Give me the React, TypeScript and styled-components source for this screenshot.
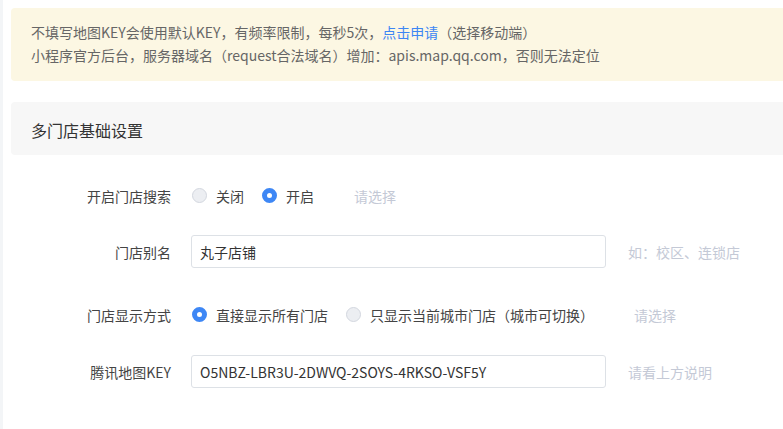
import { useState } from "react";
import styled, { createGlobalStyle } from "styled-components";

const GlobalStyle = createGlobalStyle`
    html, body {
        margin: 0;
        padding: 0;
        background: #f3f5f7;
        overflow: hidden;
    }
    body {
        font-family: "Noto Sans CJK SC", "Noto Sans", sans-serif;
        font-size: 14px;
        color: #333;
    }
`;

interface RowProps {
    label: string;
    hint?: string;
    gap: number;
    children: React.ReactNode;
}

const FormRow: React.FC<RowProps> = (props) => {
    return (
        <SC.Row $gap={props.gap}>
            <SC.Label>{props.label}</SC.Label>
            <SC.Control>{props.children}</SC.Control>
            {props.hint && <SC.Hint>{props.hint}</SC.Hint>}
        </SC.Row>
    );
};

interface RadioProps {
    options: string[];
    value: number;
    onChange: (index: number) => void;
}

const RadioGroup: React.FC<RadioProps> = (props) => {
    return (
        <>
            {props.options.map((text, i) => (
                <SC.RadioItem key={text} onClick={() => props.onChange(i)}>
                    <SC.RadioDot $checked={props.value === i} />
                    <span>{text}</span>
                </SC.RadioItem>
            ))}
        </>
    );
};

export default function App() {
    const [search, setSearch] = useState(1);
    const [mode, setMode] = useState(0);
    const [alias, setAlias] = useState("丸子店铺");
    const [mapKey, setMapKey] = useState("O5NBZ-LBR3U-2DWVQ-2SOYS-4RKSO-VSF5Y");

    return (
        <>
            <GlobalStyle />
            <SC.Panel>
                <SC.Notice>
                    <div>
                        不填写地图KEY会使用默认KEY，有频率限制，每秒5次，<SC.Link>点击申请</SC.Link>（选择移动端）
                    </div>
                    <div>小程序官方后台，服务器域名（request合法域名）增加：apis.map.qq.com，否则无法定位</div>
                </SC.Notice>
                <SC.SectionTitle>多门店基础设置</SC.SectionTitle>
                <SC.Form>
                    <FormRow label="开启门店搜索" hint="请选择" gap={23}>
                        <RadioGroup options={["关闭", "开启"]} value={search} onChange={setSearch} />
                    </FormRow>
                    <FormRow label="门店别名" hint="如：校区、连锁店" gap={30}>
                        <SC.Input value={alias} onChange={(e) => setAlias(e.target.value)} />
                    </FormRow>
                    <FormRow label="门店显示方式" hint="请选择" gap={24}>
                        <RadioGroup
                            options={["直接显示所有门店", "只显示当前城市门店（城市可切换）"]}
                            value={mode}
                            onChange={setMode}
                        />
                    </FormRow>
                    <FormRow label="腾讯地图KEY" hint="请看上方说明" gap={0}>
                        <SC.Input value={mapKey} onChange={(e) => setMapKey(e.target.value)} />
                    </FormRow>
                </SC.Form>
            </SC.Panel>
        </>
    );
}

const SC = {
    Panel: styled.div`
        margin-left: 3px;
        width: 1000px;
        height: 429px;
        box-sizing: border-box;
        padding: 8px 0 0 8px;
        background: #fff;
    `,
    Notice: styled.div`
        background: #fcf7e3;
        border-radius: 4px;
        padding: 13px 20px 14px;
        line-height: 23px;
        color: #666;
    `,
    Link: styled.span`
        color: #3d86f4;
        cursor: pointer;
    `,
    SectionTitle: styled.div`
        margin-top: 21px;
        height: 53px;
        line-height: 56px;
        padding-left: 20px;
        background: #f7f7f7;
        border-radius: 4px;
        font-size: 16px;
        color: #333;
    `,
    Form: styled.div`
        padding-top: 24px;
    `,
    Row: styled.div<{ $gap: number }>`
        display: flex;
        align-items: center;
        height: 33px;
        margin-bottom: ${(p) => p.$gap}px;
    `,
    Label: styled.div`
        width: 160px;
        text-align: right;
        color: #444;
        margin-right: 20px;
    `,
    Control: styled.div`
        display: flex;
        align-items: center;
    `,
    Hint: styled.div`
        margin-left: 22px;
        color: #c4c9d6;
    `,
    RadioItem: styled.label`
        display: flex;
        align-items: center;
        margin-right: 18px;
        color: #444;
        cursor: pointer;
        &:first-child {
            margin-left: 1px;
        }
    `,
    RadioDot: styled.span<{ $checked: boolean }>`
        box-sizing: border-box;
        width: 15px;
        height: 15px;
        border-radius: 50%;
        margin-right: 9px;
        background: ${(p) => (p.$checked ? "#fff" : "#eceef2")};
        border: ${(p) => (p.$checked ? "5px solid #3e87f5" : "1px solid #d3d7df")};
    `,
    Input: styled.input`
        box-sizing: border-box;
        width: 415px;
        height: 33px;
        padding: 0 8px;
        border: 1px solid #dde1e6;
        border-radius: 3px;
        font-family: inherit;
        font-size: 14px;
        color: #333;
        outline: none;
    `,
};
